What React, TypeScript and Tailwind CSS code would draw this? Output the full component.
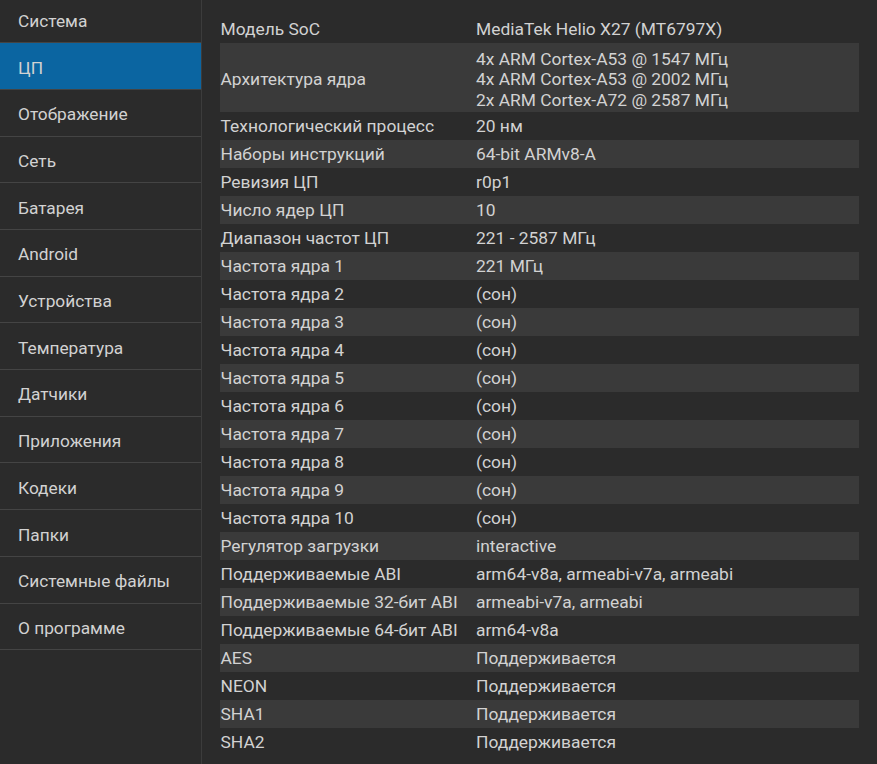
const menu = [
  "Система",
  "ЦП",
  "Отображение",
  "Сеть",
  "Батарея",
  "Android",
  "Устройства",
  "Температура",
  "Датчики",
  "Приложения",
  "Кодеки",
  "Папки",
  "Системные файлы",
  "О программе",
];

const rows: [string, string[]][] = [
  ["Модель SoC", ["MediaTek Helio X27 (MT6797X)"]],
  [
    "Архитектура ядра",
    [
      "4x ARM Cortex-A53 @ 1547 МГц",
      "4x ARM Cortex-A53 @ 2002 МГц",
      "2x ARM Cortex-A72 @ 2587 МГц",
    ],
  ],
  ["Технологический процесс", ["20 нм"]],
  ["Наборы инструкций", ["64-bit ARMv8-A"]],
  ["Ревизия ЦП", ["r0p1"]],
  ["Число ядер ЦП", ["10"]],
  ["Диапазон частот ЦП", ["221 - 2587 МГц"]],
  ["Частота ядра 1", ["221 МГц"]],
  ["Частота ядра 2", ["(сон)"]],
  ["Частота ядра 3", ["(сон)"]],
  ["Частота ядра 4", ["(сон)"]],
  ["Частота ядра 5", ["(сон)"]],
  ["Частота ядра 6", ["(сон)"]],
  ["Частота ядра 7", ["(сон)"]],
  ["Частота ядра 8", ["(сон)"]],
  ["Частота ядра 9", ["(сон)"]],
  ["Частота ядра 10", ["(сон)"]],
  ["Регулятор загрузки", ["interactive"]],
  ["Поддерживаемые ABI", ["arm64-v8a, armeabi-v7a, armeabi"]],
  ["Поддерживаемые 32-бит ABI", ["armeabi-v7a, armeabi"]],
  ["Поддерживаемые 64-бит ABI", ["arm64-v8a"]],
  ["AES", ["Поддерживается"]],
  ["NEON", ["Поддерживается"]],
  ["SHA1", ["Поддерживается"]],
  ["SHA2", ["Поддерживается"]],
];

export default function App() {
  return (
    <div className="flex h-[764px] w-[877px] overflow-hidden bg-[#2b2b2b] font-['Roboto',sans-serif] text-[#d2d2d2]">
      {/* Sidebar */}
      <aside className="w-[202px] shrink-0 border-r border-[#3c3c3c]">
        <ul className="mt-[-3.4px]">
          {menu.map((item) => (
            <li
              key={item}
              className={
                item === "ЦП"
                  ? "flex h-[46.7px] items-center border-b border-[#444444] bg-[#0b65a1] pt-[3px] pl-[18px] text-[17.3px] leading-[22px]"
                  : "flex h-[46.7px] items-center border-b border-[#444444] pt-[3px] pl-[18px] text-[17.3px] leading-[22px]"
              }
            >
              {item}
            </li>
          ))}
        </ul>
      </aside>

      {/* Info table */}
      <main className="flex-1 pt-[15px] pl-[18px] pr-[18px]">
        {rows.map(([label, values], idx) => (
          <div
            key={label}
            className={
              (values.length > 1 ? "h-[69px] pt-[4px] " : "h-[28px] pt-[1px] ") +
              (idx % 2 === 1
                ? "flex items-center bg-[#3a3a3a] text-[17.4px] leading-[20.5px]"
                : "flex items-center text-[17.4px] leading-[20.5px]")
            }
          >
            <div className="w-[256px] shrink-0 pl-[0.5px]">{label}</div>
            <div>
              {values.map((v) => (
                <div key={v}>{v}</div>
              ))}
            </div>
          </div>
        ))}
      </main>
    </div>
  );
}
